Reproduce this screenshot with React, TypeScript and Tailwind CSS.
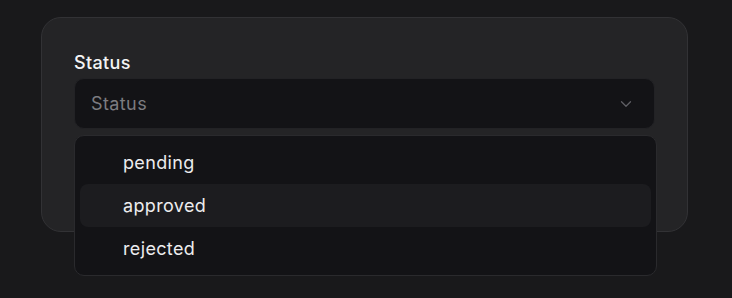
import { ChevronDown } from "lucide-react";

const options = ["pending", "approved", "rejected"];

export default function App() {
  const highlighted = "approved";

  return (
    <div className="min-h-[298px] w-full bg-[#19191b] pt-[17px] pl-[41px] font-['Inter',sans-serif] tracking-[0.022em]">
      <div className="relative h-[215px] w-[647px] rounded-[20px] border border-[#323235] bg-[#242426] px-[32px] pt-[33px]">
        <label className="block text-[18px] font-medium leading-[24px] text-[#f4f4f5]">Status</label>
        <button className="mt-[3px] flex h-[51px] w-full items-center justify-between rounded-[10px] border border-[#222225] bg-[#131316] pl-[16px] pr-[19px] text-[18px] tracking-[0.022em] text-[#7c7c80]">
          <span>Status</span>
          <ChevronDown className="h-[18px] w-[18px] text-[#5f5f64]" strokeWidth={1.75} />
        </button>

        <ul className="absolute left-[32px] top-[117px] w-[583px] rounded-[10px] border border-[#2a2a2d] bg-[#131316] px-[5px] py-[5px]">
          {options.map((o) => (
            <li
              key={o}
              className={`flex h-[43px] items-center rounded-[8px] pl-[43px] text-[18px] text-[#ececee] ${
                o === highlighted ? "bg-[#1c1c1f]" : ""
              }`}
            >
              {o}
            </li>
          ))}
        </ul>
      </div>
    </div>
  );
}
